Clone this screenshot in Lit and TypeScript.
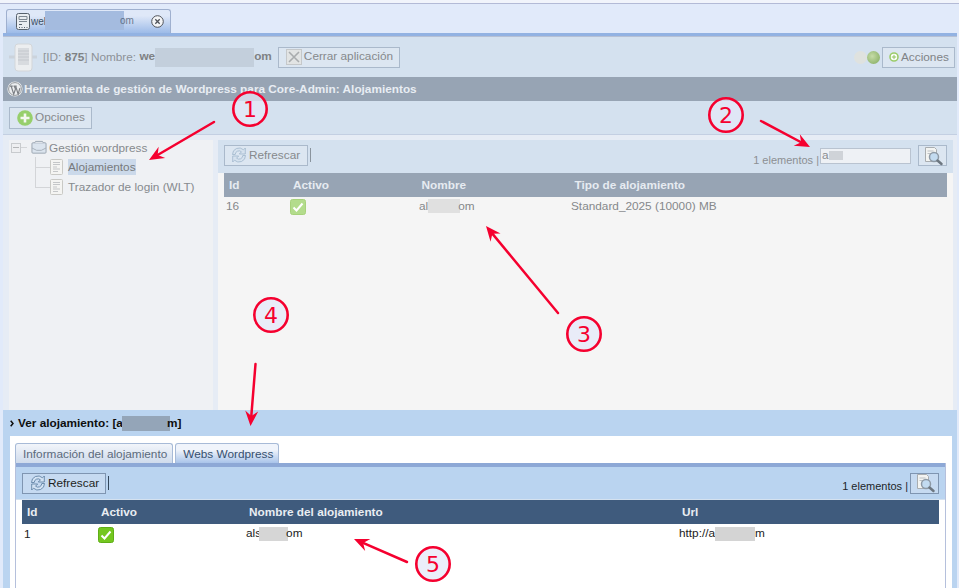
import { LitElement, html, css, svg } from "lit";
import { customElement } from "lit/decorators.js";

const docIcon = html`<svg class="doc" width="14" height="16" viewBox="0 0 14 16"><rect x=".5" y=".5" width="12" height="15" rx="1" fill="#f4f4f2" stroke="#c9c9c5"/><path d="M3 3.500h7M3 5.500h7M3 8h4M3 10h7M3 12.500h5" stroke="#c4c6c8" stroke-width="1"/></svg>`;
const refreshIcon = (c1: string, c2: string) => html`<svg width="16" height="18" viewBox="0 0 16 18"><path d="M1.500 8.500a6.500 6.500 0 0 1 11-4.700l1.800-1.800v6h-6l2.200-2.200a3.800 3.800 0 0 0-6.300 2.700z" fill="${c1}" stroke="${c2}" stroke-width=".8"/><path d="M14.500 9.500a6.500 6.500 0 0 1-11 4.700l-1.800 1.800v-6h6l-2.200 2.200a3.800 3.800 0 0 0 6.300-2.700z" fill="${c1}" stroke="${c2}" stroke-width=".8"/></svg>`;
const searchIcon = html`<svg width="22" height="20" viewBox="0 0 22 20"><path d="M3.500 1.500h9l2 2v12h-11z" fill="#f3f4f2" stroke="#a9adb0"/><path d="M5.500 5h6M5.500 7.500h3" stroke="#bcc0c4"/><circle cx="12" cy="11" r="4.500" fill="#c3dbf0" stroke="#8e9aa6" stroke-width="1.500"/><path d="M15.500 14.500l4 3.500" stroke="#6d7781" stroke-width="2.500" stroke-linecap="round"/></svg>`;
const check = (dim: boolean) => html`<svg class="ck" width="16" height="16" viewBox="0 0 16 16"><rect x=".5" y=".5" width="15" height="15" rx="2" fill="${dim ? "#b3dc8c" : "#74c71f"}" stroke="${dim ? "#a7d27b" : "#5fae17"}"/><path d="M3.500 8.500l3 3 6-7" fill="none" stroke="#fff" stroke-width="2"/></svg>`;

const arrows: [number, number, number, number][] = [
  [214, 122, 149, 160],
  [761, 121, 810, 147],
  [558, 313, 486, 226],
  [255.500, 364, 250.500, 426],
  [407, 562, 354, 539],
];
const marks: [number, number, string][] = [
  [250, 109, "1"],
  [726, 115, "2"],
  [584, 334, "3"],
  [271, 315, "4"],
  [433, 564, "5"],
];

function arrow([x1, y1, x2, y2]: [number, number, number, number]) {
  const a = Math.atan2(y2 - y1, x2 - x1);
  const p = (d: number, s: number) => `${x2 - d * Math.cos(a) - s * Math.sin(a)},${y2 - d * Math.sin(a) + s * Math.cos(a)}`;
  return svg`<line x1="${x1}" y1="${y1}" x2="${x2 - 8 * Math.cos(a)}" y2="${y2 - 8 * Math.sin(a)}" stroke="#f5002f" stroke-width="2.500" stroke-linecap="round"/><polygon points="${x2},${y2} ${p(15, 6.500)} ${p(10, 0)} ${p(15, -6.500)}" fill="#f5002f"/>`;
}

@customElement("app-root")
export class AppRoot extends LitElement {
  static styles = css`
    :host { display: block; position: relative; width: 959px; height: 588px; overflow: hidden; background: #e1eafa; font-family: "Liberation Sans", Arial, sans-serif; font-size: 11.800px; color: #8a8d90; }
    * { box-sizing: border-box; }
    .top { height: 30px; background: #e1eafa; border-top: 1px solid #b3bad6; margin-top: 3px; padding: 5px 0 0 6px; }
    .cap { height: 3px; position: absolute; left: 0; right: 0; top: 0; background: #f1f4fb; }
    .tab { width: 165px; height: 24px; border: 1px solid #9fb0cf; border-bottom: 0; border-radius: 3px 3px 0 0; background: linear-gradient(#dfe8f8 25%, #9dbbe8); display: flex; align-items: center; padding: 0 6px 0 9px; color: #3d4f63; font-size: 10px; }
    .tab .t { flex: 1; white-space: nowrap; }
    .tab svg { flex: none; }
    .tab .m { width: 79px; height: 19px; background: #a4bbdf; margin: -3px 0 0 -1px; }
    .tab .om { opacity: .7; margin-left: -4px; }
    .blur { display: inline-block; vertical-align: middle; }
    .shell { width: 954px; margin-left: 3px; border-top: 3px solid #92b2e2; display: flex; flex-direction: column; height: 555px; }
    .head { height: 41px; background: #d4e1ef; border-top: 1px solid #b6c0d4; display: flex; align-items: center; padding: 0 2px 0 6px; }
    .head .id { margin-left: 6px; white-space: nowrap; color: #8d9298; }
    .head b { color: #7e8184; }
    .head .m { width: 99px; height: 19px; background: #c3cfdc; }
    .btn { display: inline-flex; align-items: center; border: 1px solid #aab9cb; background: #dce6f1; color: #86898c; height: 21px; white-space: nowrap; }
    .close { margin-left: 6px; width: 122px; padding: 0 0 2px 7px; gap: 2px; height: 21px; }
    .close svg { margin-top: 2px; }
    .leds { margin-left: auto; display: flex; margin-right: 2px; }
    .leds span { width: 13px; height: 13px; border-radius: 50%; }
    .led1 { background: #dfe2df; }
    .led2 { background: radial-gradient(circle at 40% 40%, #c6dca8, #7fa85a); }
    .act { width: 73px; height: 21px; padding-left: 6px; gap: 2px; color: #7f8386; }
    .title { height: 24px; background: #97a4b4; color: #e8edf3; font-weight: bold; display: flex; align-items: center; gap: 1px; padding-left: 4px; white-space: nowrap; }
    .opts { height: 34px; background: #d4e1ef; border-bottom: 1px solid #c3cfe2; display: flex; align-items: center; padding-left: 6px; }
    .opts .btn { width: 83px; height: 22px; padding: 0 0 2px 7px; gap: 2px; }
    .opts .btn svg { margin-top: 2px; }
    .mid { height: 275px; background: #e6ecf5; display: flex; padding: 5px 4px 0 6px; }
    .tree { width: 204px; background: #eff1f4; padding: 0 0 0 2px; position: relative; color: #868a8e; }
    .tree .row { display: flex; align-items: center; height: 20px; white-space: nowrap; }
    .tree .row.root { height: 15px; margin-bottom: 2px; }
    .exp { width: 10px; height: 10px; border: 1px solid #c8cbce; background: #eeeff1; position: relative; margin: 1px 10px 0 0; }
    .exp::before { content: ""; position: absolute; left: 1px; right: 1px; top: 3px; height: 1px; background: #b4b6b8; }
    .exp::after { content: ""; position: absolute; left: 9px; width: 6px; top: 3px; height: 1px; background: #d3d5d8; }
    .folder { margin-right: 2px; }
    .tree .sub { padding-left: 24px; }
    .sub .dash { width: 15px; height: 1px; background: #d3d5d8; flex: none; }
    .sub .doc { margin-right: 4px; flex: none; }
    .hl { background: #cbd9ea; padding: 1px 0; color: #77797c; }
    .vline { position: absolute; left: 26px; top: 17px; height: 30px; width: 1px; background: #d3d5d8; }
    .right { width: 735px; margin-left: 5px; display: flex; flex-direction: column; background: #f5f5f5; }
    .tb { display: flex; align-items: center; background: #d4e1ef; height: 33px; padding: 0 6px; }
    .tb .refresh { width: 84px; height: 21px; padding-left: 6px; gap: 2px; margin-bottom: 3px; }
    .tb .sep { margin-bottom: 3px; }
    .sep { width: 1px; height: 14px; background: #8a949e; margin-left: 2px; }
    .count { margin-left: auto; color: #8c8f92; white-space: nowrap; padding-top: 6px; font-size: 11px; }
    .search { width: 91px; height: 16px; margin: 0 7px 1px 1px; background: #eef1f5; border: 1px solid #b9c3d0; line-height: 13px; padding-left: 1px; color: #8a8d90; overflow: hidden; }
    .search .m { width: 14px; height: 9px; background: #cfd3d8; }
    .sbtn { width: 29px; height: 21px; justify-content: center; }
    .tb .sbtn { margin-bottom: 2px; }
    .grid { display: grid; align-items: center; }
    .g1 { margin: 0 6px; }
    .hd { height: 24px; font-weight: bold; }
    .ck { display: block; margin-top: 2px; }
    .g1.hd { background: #97a4b4; color: #e6ebf1; padding-left: 5px; grid-template-columns: 64px 128.500px 153px 1fr; }
    .g1.row { height: 18px; padding: 0 0 2px 2px; grid-template-columns: 64px 129px 152px 1fr; color: #85888b; }
    .g1.row .m { width: 32px; height: 14px; background: #e0e0e0; margin-right: -2px; }
    .lower { flex: 1; background: #bad4f0; padding: 0 5px 0 7px; min-height: 0; }
    .lh { height: 26px; display: flex; align-items: center; color: #0e0e0e; font-weight: bold; white-space: nowrap; }
    .lh svg { margin-right: 4px; flex: none; }
    .lh .m { width: 48px; height: 15px; background: #94a5b8; margin: 0 -3px 0 -1px; }
    .wbody { background: #fff; height: 152px; padding: 7px 0 0 5px; }
    .tabs { display: flex; gap: 2px; height: 20px; }
    .t2 { height: 20px; border: 1px solid #a7bad7; border-bottom: 0; border-radius: 3px 3px 0 0; padding: 0 5px 0 7px; line-height: 20px; white-space: nowrap; color: #5b6a7c; background: linear-gradient(#f2f5fa, #cfdbec); }
    .t2.on { color: #36506f; background: linear-gradient(#f0f4fb 30%, #a9c4ea); }
    .frame { width: 931px; border-left: 1px solid #b5c0dc; border-right: 1px solid #b5c0dc; height: 125px; }
    .bar { border-top: 4px solid #8da8d6; border-bottom: 1px solid #d4e1ef; background: #bad4f0; height: 37px; display: flex; align-items: center; padding: 0 6px; }
    .bar .btn { background: #c6daf1; border-color: #7f95b1; color: #1d1f22; }
    .bar .refresh { width: 84px; height: 21px; padding-left: 7px; gap: 2px; }
    .bar .sep { background: #33465a; height: 14px; }
    .bar .count { color: #212428; padding-top: 6px; margin-right: 2px; }
    .bar .sbtn { height: 21px; width: 29px; }
    .g2 { grid-template-columns: 74px 148px 433px 1fr; margin: 0 6px; }
    .g2.hd { background: #3f5b7d; color: #e9edf2; padding-left: 5px; }
    .g2.row { height: 19px; color: #222; padding-left: 2px; }
    .g2.row .m1 { width: 29px; height: 14px; background: #d6d6d6; margin: 0 -2px; }
    .g2.row .m2 { width: 40px; height: 14px; background: #d4d4d4; }
    .overlay { position: absolute; left: 0; top: 0; pointer-events: none; }
    .overlay text { font-family: "DejaVu Sans", sans-serif; font-size: 22px; fill: #f5002f; text-anchor: middle; }
  `;

  render() {
    return html`
      <div class="cap"></div>
      <div class="top">
        <div class="tab">
          <svg width="15" height="17" viewBox="0 0 15 17"><rect x=".5" y=".5" width="13" height="16" rx="2" fill="#e9edf1" stroke="#56616c"/><path d="M3 3.500h8v3H3zM3 8.500h8" fill="none" stroke="#7e8892"/><path d="M3 11h3v1H3zM3 14h1v1H3zM5.500 14h1v1h-1zM8 14h1v1H8zM10.500 14h1v1h-1z" fill="#56616c"/></svg>
          <span class="t">wel<span class="blur m"></span><span class="om">om</span></span>
          <svg width="13" height="13" viewBox="0 0 13 13"><circle cx="6.500" cy="6.500" r="5.800" fill="#f4f5f7" stroke="#4f5258"/><path d="M4.300 4.300l4.400 4.400M8.700 4.300l-4.400 4.400" stroke="#4f5258" stroke-width="1.300"/></svg>
        </div>
      </div>
      <div class="shell">
        <div class="head">
          <svg width="28" height="29" viewBox="0 0 28 29"><path d="M0 14h28" stroke="#cbd3dc" stroke-width="3"/><rect x="6" y="1" width="17" height="27" rx="3" fill="#eceef0" stroke="#d3d6d9"/><rect x="9" y="5" width="11" height="17" fill="#d8dbdf"/><path d="M9 8h11M9 11h11M9 14h11M9 17h11" stroke="#c4c8cd"/></svg>
          <span class="id">[ID: <b>875</b>] Nombre: <b>we<span class="blur m"></span>om</b></span>
          <span class="btn close">
            <svg width="16" height="16" viewBox="0 0 16 16"><rect x=".5" y=".5" width="15" height="15" fill="#e2e4e4" stroke="#c5c8ca"/><path d="M3 3l10 10M13 3L3 13" stroke="#a9acae" stroke-width="1.600"/></svg>
            Cerrar aplicación
          </span>
          <span class="leds"><span class="led1"></span><span class="led2"></span></span>
          <span class="btn act">
            <svg width="10" height="10" viewBox="0 0 10 10"><circle cx="5" cy="5" r="4" fill="#fff" stroke="#9ccc6a" stroke-width="1.600"/><path d="M2.800 5h4.400M5 2.800v4.400" stroke="#8fc25c"/></svg>
            Acciones
          </span>
        </div>
        <div class="title">
          <svg width="16" height="16" viewBox="0 0 16 16"><circle cx="8" cy="8" r="7.600" fill="#eceef0"/><circle cx="8" cy="8" r="6.400" fill="none" stroke="#7f8489" stroke-width=".8"/><path d="M2.800 5.200h3M4.200 5.200l2.500 8L8.500 8 7.300 5.200M6.500 5.200h3.200M8.700 5.200l2.400 8 1.800-6" fill="none" stroke="#7d8186" stroke-width="1.200"/></svg>
          Herramienta de gestión de Wordpress para Core-Admin: Alojamientos
        </div>
        <div class="opts">
          <span class="btn">
            <svg width="16" height="16" viewBox="0 0 16 16"><circle cx="8" cy="8" r="7.800" fill="#97cf6c"/><path d="M3.500 8h9M8 3.500v9" stroke="#f5f8f1" stroke-width="2.600"/></svg>
            Opciones
          </span>
        </div>
        <div class="mid">
          <div class="tree">
            <div class="row root">
              <span class="exp"></span>
              <svg class="folder" width="16" height="15" viewBox="0 0 17 15"><path d="M1 3.500a1 1 0 0 1 1-1h13a1 1 0 0 1 1 1v9a1 1 0 0 1-1 1H2a1 1 0 0 1-1-1z" fill="#dbe4ee" stroke="#9aa4b0"/><path d="M1 8l5 2.500h5L16 8" fill="none" stroke="#a4aeb9"/><path d="M4 2.500l.8-1.500h7.400l.8 1.500" fill="#eef1f4" stroke="#9aa4b0"/></svg>
              Gestión wordpress
            </div>
            <div class="vline"></div>
            <div class="row sub"><span class="dash"></span>${docIcon}<span class="hl">Alojamientos</span></div>
            <div class="row sub"><span class="dash"></span>${docIcon}<span>Trazador de login (WLT)</span></div>
          </div>
          <div class="right">
            <div class="tb">
              <span class="btn refresh">${refreshIcon("#d6e2ee", "#9fb6cc")} Refrescar</span>
              <span class="sep"></span>
              <span class="count">1 elementos |</span>
              <span class="search">a<span class="blur m"></span></span>
              <span class="btn sbtn">${searchIcon}</span>
            </div>
            <div class="grid g1 hd"><span>Id</span><span>Activo</span><span>Nombre</span><span>Tipo de alojamiento</span></div>
            <div class="grid g1 row"><span>16</span><span>${check(true)}</span><span>al<span class="blur m"></span>om</span><span>Standard_2025 (10000) MB</span></div>
          </div>
        </div>
        <div class="lower">
          <div class="lh">
            <svg width="4" height="7" viewBox="0 0 4 7"><path d="M.7.7L3 3.500.7 6.300" fill="none" stroke="#0e0e0e" stroke-width="1.500"/></svg>
            Ver alojamiento: [a<span class="blur m"></span>m]
          </div>
          <div class="wbody">
            <div class="tabs">
              <div class="t2">Información del alojamiento</div>
              <div class="t2 on">Webs Wordpress</div>
            </div>
            <div class="frame">
              <div class="bar">
                <span class="btn refresh">${refreshIcon("#d3e3f4", "#56789c")} Refrescar</span>
                <span class="sep"></span>
                <span class="count">1 elementos |</span>
                <span class="btn sbtn">${searchIcon}</span>
              </div>
              <div class="grid g2 hd"><span>Id</span><span>Activo</span><span>Nombre del alojamiento</span><span>Url</span></div>
              <div class="grid g2 row"><span>1</span><span>${check(false)}</span><span>als<span class="blur m1"></span>om</span><span>http://a<span class="blur m2"></span>m</span></div>
            </div>
          </div>
        </div>
      </div>
      <svg class="overlay" width="959" height="588" viewBox="0 0 959 588">
        ${arrows.map(arrow)}
        ${marks.map(([x, y, t]) => svg`<circle cx="${x}" cy="${y}" r="16.700" fill="#e4e8f8" fill-opacity=".75" stroke="#f5002f" stroke-width="2.600"/><text x="${x}" y="${y + 8}">${t}</text>`)}
      </svg>
    `;
  }
}
